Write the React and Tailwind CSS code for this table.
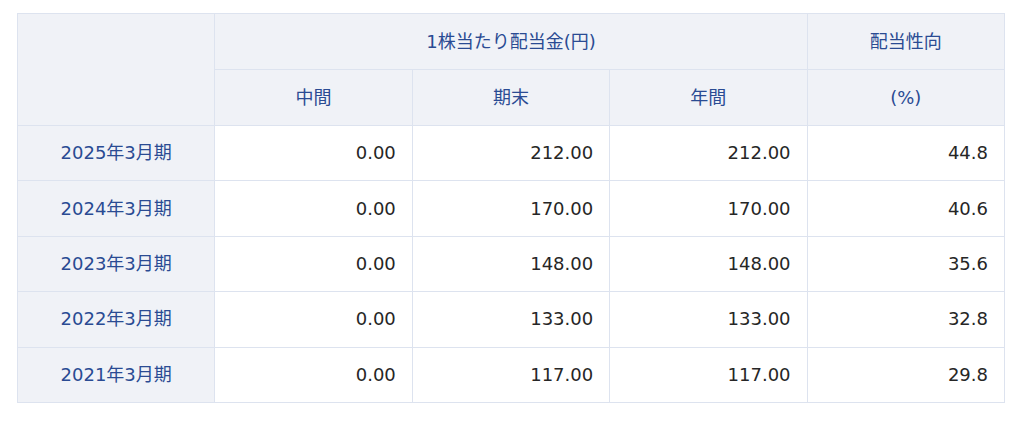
const rows = [
  { period: "2025年3月期", mid: "0.00", end: "212.00", year: "212.00", ratio: "44.8" },
  { period: "2024年3月期", mid: "0.00", end: "170.00", year: "170.00", ratio: "40.6" },
  { period: "2023年3月期", mid: "0.00", end: "148.00", year: "148.00", ratio: "35.6" },
  { period: "2022年3月期", mid: "0.00", end: "133.00", year: "133.00", ratio: "32.8" },
  { period: "2021年3月期", mid: "0.00", end: "117.00", year: "117.00", ratio: "29.8" },
];

const th = "border border-[#dde3ef] bg-[#f0f2f7] text-[#2a4b93] font-normal text-center";
const td = "border border-[#dde3ef] bg-white text-[#262626] text-right pr-4";

const App = () => {
  return (
    <div
      className="w-[1024px] h-[427px] bg-white pt-[13px] pl-[17px]"
      style={{ fontFamily: '"DejaVu Sans", "Noto Sans CJK JP", sans-serif' }}
    >
      <table className="w-[988px] table-fixed border-collapse text-[18px] leading-none">
        <thead>
          <tr className="h-[56px]">
            <th rowSpan={2} className={th}></th>
            <th colSpan={3} className={th}>1株当たり配当金(円)</th>
            <th className={th}>配当性向</th>
          </tr>
          <tr className="h-[56px]">
            <th className={th}>中間</th>
            <th className={th}>期末</th>
            <th className={th}>年間</th>
            <th className={th}>(%)</th>
          </tr>
        </thead>
        <tbody>
          {rows.map((r) => (
            <tr key={r.period} className="h-[55.4px]">
              <th className={th}>{r.period}</th>
              <td className={td}>{r.mid}</td>
              <td className={td}>{r.end}</td>
              <td className={td}>{r.year}</td>
              <td className={td}>{r.ratio}</td>
            </tr>
          ))}
        </tbody>
      </table>
    </div>
  );
};

export default App;
